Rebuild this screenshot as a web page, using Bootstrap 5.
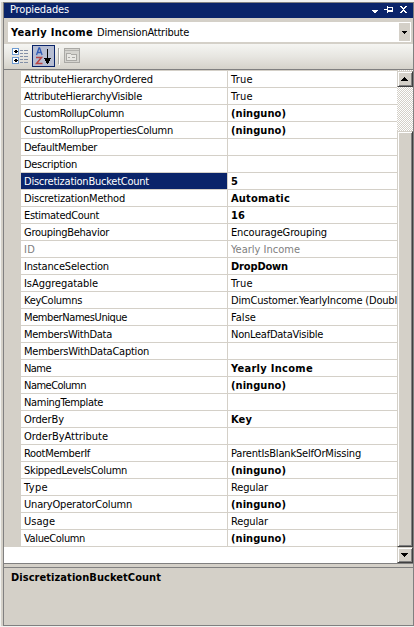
<!DOCTYPE html>
<html lang="es">
<head>
<meta charset="utf-8">
<meta name="viewport" content="width=device-width, initial-scale=1">
<title>Propiedades</title>
<link href="https://cdn.jsdelivr.net/npm/bootstrap@5.3.0/dist/css/bootstrap.min.css" rel="stylesheet">
<style>
:root{--face:#d4d0c8;--shade:#808080;--navy:#0a246a}
body{background:#f2f3f1;font:11px/16px "DejaVu Sans Condensed","DejaVu Sans",sans-serif;font-stretch:condensed;color:#000;height:627px}
.frame{height:627px;padding:2px 0 1px 1px}
.edge{width:2px;background:var(--face)}
.pane{border:1px solid var(--shade);background:var(--face);height:624px;min-width:0}
.titlebar{height:15px;background:var(--navy);color:#fff;padding-left:6px;line-height:14px}
.picker{height:20px;margin:4px 2px 2px 4px;background:#fff;padding:1px 1px 1px 3px;line-height:20px}
.picker-type{margin-left:4px}
.picker-btn{width:11px;height:18px;background:var(--face)}
.tools{height:25px;background:linear-gradient(#f5f5f2,#e7e6e1 50%,#d5d2ca);padding:1px 0 2px 8px}
.sort-on{width:23px;height:22px;border:1px solid var(--navy);background:#b6bdd2;margin:0 3px 0 2px}
.tool-sep{width:1px;height:16px;background:#a6a6a6;box-shadow:1px 1px #fff;margin-right:5px}
.sheet{height:495px;border-top:1px solid var(--shade);border-bottom:1px solid var(--shade);background:#fff}
.rows{min-width:0;border-top:1px solid var(--face)}
.prop{height:17px;border-left:17px solid var(--face);white-space:nowrap}
.prop>div{border-bottom:1px solid var(--face);height:17px;overflow:hidden;line-height:18px}
.key{width:207px;padding-left:3px;border-right:1px solid var(--face)}
.val{padding-left:3px;min-width:0}
.chosen .key{background:var(--navy);color:#fff}
.dim{color:#808080}
b{font-weight:700}
.track{width:16px;padding-top:1px;background:repeating-conic-gradient(#fff 0 25%,#d4d0c8 0 50%) 0 0/2px 2px}
.knob{width:16px;height:16px;background:var(--face);border:1px solid;border-color:#d4d0c8 #404040 #404040 #d4d0c8;box-shadow:inset 1px 1px #fff,inset -1px -1px #808080}
.thumb{height:416px;margin-top:44px}
.help{height:58px;margin-top:3px;border-top:1px solid var(--shade);padding:2px 0 0 7px}
svg{display:block;flex:none}
</style>
<script src="https://cdn.jsdelivr.net/npm/bootstrap@5.3.0/dist/js/bootstrap.bundle.min.js"></script>
</head>
<body class="overflow-hidden m-0">
<main class="frame d-flex">
<div class="edge"></div>
<section class="pane flex-grow-1">
<header class="titlebar d-flex"><div class="flex-grow-1"><span data-w="59">Propiedades</span></div>
<svg width="42" height="15" shape-rendering="crispEdges" fill="#fff"><path d="M1 7h6v1h-1v1h-1v1h-2v-1h-1v-1h-1zM13 6h3v-3h1v1h5v5h-5v1h-1v-3h-3zM17 5v2h4v-2zM29 3h2v1h1v1h1v-1h1v-1h2v1h-1v1h-1v1h-1v1h1v1h1v1h1v1h-2v-1h-1v-1h-1v1h-1v1h-2v-1h1v-1h1v-1h1v-1h-1v-1h-1v-1h-1z" fill-rule="evenodd"/></svg></header>
<div class="picker d-flex"><div class="flex-grow-1"><b data-w="82">Yearly Income</b><span class="picker-type" data-w="92">DimensionAttribute</span></div>
<div class="picker-btn"><svg width="11" height="18" shape-rendering="crispEdges"><path d="M3 8h5v1h-1v1h-1v1h-1v-1h-1v-1h-1z"/></svg></div></div>
<div class="tools d-flex align-items-center">
<svg width="18" height="18" shape-rendering="crispEdges"><g fill="#fff" stroke="#6f9bd1"><rect x=".5" y="1.500" width="6" height="6" rx="1"/><rect x=".5" y="10.500" width="6" height="6" rx="1"/></g><path d="M2 4h4v1h-4zM3 3h2v3h-2zM2 13h4v1h-4zM3 12h2v3h-2z"/><path d="M8 3h3v1h-3zM8 6h3v1h-3zM8 9h3v1h-3zM8 12h3v1h-3zM8 15h3v1h-3zM12 3h4v1h-4zM12 6h4v1h-4zM12 9h4v1h-4zM12 12h4v1h-4zM12 15h4v1h-4z" fill="#8390a7"/></svg>
<div class="sort-on"><svg width="21" height="20"><path d="M3.500 9l2.500-7h.6l2.500 7M4.500 6.500h4" fill="none" stroke="#315bb5" stroke-width="1.300"/><path d="M3 11.500h5.500l-5 6h6" fill="none" stroke="#b94545" stroke-width="1.500"/><path d="M14 3h1v9h3v1h-1v2h-1v2h-1v1h-1v-1h-1v-2h-1v-2h-1v-1h3z" shape-rendering="crispEdges"/></svg></div>
<div class="tool-sep"></div>
<svg width="16" height="16" shape-rendering="crispEdges"><path d="M.5.5h15v14H.5z" fill="#d5d4cf" stroke="#aaa9a5"/><path d="M1 2.500h14" stroke="#b4b3af"/><path d="M2.500 12.500v-7h4l1 1h5v6zM4 9.500h2M8 9.500h3" fill="#e9e8e4" stroke="#aaa9a5"/></svg>
</div>
<div class="sheet d-flex">
<div class="rows flex-grow-1" id="rows"></div>
<div class="track d-flex flex-column"><div class="knob"><svg width="14" height="14" shape-rendering="crispEdges"><path d="M6 5h1v1h1v1h1v1h1v1h-7v-1h1v-1h1v-1h1z"/></svg></div><div class="knob thumb"></div><div class="knob"><svg width="14" height="14" shape-rendering="crispEdges"><path d="M3 5h7v1h-1v1h-1v1h-1v1h-1v-1h-1v-1h-1v-1h-1z"/></svg></div></div>
</div>
<footer class="help"><b data-w="150">DiscretizationBucketCount</b></footer>
</section>
</main>
<script>
// name, name width, value, value width, style flag
const props=[
["AttributeHierarchyOrdered",129,"True",22],["AttributeHierarchyVisible",118,"True",22],
["CustomRollupColumn",100,"(ninguno)",55,"b"],["CustomRollupPropertiesColumn",149,"(ninguno)",55,"b"],
["DefaultMember",73,"",0],["Description",53,"",0],["DiscretizationBucketCount",125,"5",7,"bs"],
["DiscretizationMethod",101,"Automatic",59,"b"],["EstimatedCount",75,"16",14,"b"],
["GroupingBehavior",85,"EncourageGrouping",96],["ID",11,"Yearly Income",69,"d"],
["InstanceSelection",85,"DropDown",57,"b"],["IsAggregatable",74,"True",22],
["KeyColumns",58,"DimCustomer.YearlyIncome (Doubl",166],["MemberNamesUnique",103,"False",25],
["MembersWithData",88,"NonLeafDataVisible",92],["MembersWithDataCaption",125,"",0],
["Name",27,"Yearly Income",82,"b"],["NameColumn",62,"(ninguno)",55,"b"],["NamingTemplate",79,"",0],
["OrderBy",40,"Key",21,"b"],["OrderByAttribute",84,"",0],["RootMemberIf",66,"ParentIsBlankSelfOrMissing",130],
["SkippedLevelsColumn",103,"(ninguno)",55,"b"],["Type",24,"Regular",37],
["UnaryOperatorColumn",108,"(ninguno)",55,"b"],["Usage",31,"Regular",37],["ValueColumn",61,"(ninguno)",55,"b"]];
document.getElementById("rows").innerHTML=props.map(([k,kw,v,vw,f=""])=>{
 const t=f.includes("b")?"b":"span";
 return `<div class="prop d-flex ${f.includes("s")?"chosen":""} ${f=="d"?"dim":""}"><div class="key flex-shrink-0"><span data-w="${kw}">${k}</span></div><div class="val flex-grow-1"><${t} data-w="${vw}">${v}</${t}></div></div>`;
}).join("");
// tracking that gives each label its own width
document.querySelectorAll("[data-w]").forEach(e=>{
 const n=e.textContent.length;
 if(n)e.style.letterSpacing=(+e.dataset.w-e.getBoundingClientRect().width)/n+"px";
});
</script>
</body>
</html>
